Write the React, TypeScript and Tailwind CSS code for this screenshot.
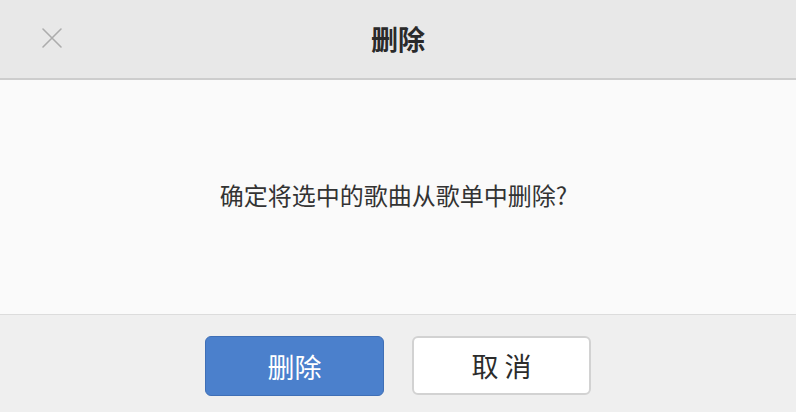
const CloseIcon = () => (
    <svg width="22" height="22" viewBox="0 0 22 22" fill="none" stroke="#acacac" strokeWidth="1.6" strokeLinecap="round">
        <path d="M2 2 L20 20 M20 2 L2 20" />
    </svg>
)

const App = () => {
    return <>
        <div className="w-[796px] h-[412px] flex flex-col overflow-hidden" style={{ fontFamily: '"Noto Sans CJK SC", "Noto Sans", sans-serif' }}>
            <div className="relative h-[80px] shrink-0 flex items-center justify-center bg-[#e8e8e8] border-b-2 border-[#cdcdcd]">
                <button className="absolute left-[41px] top-[27px] cursor-pointer">
                    <CloseIcon />
                </button>
                <h1 className="text-[27px] font-bold text-[#2a2a2a] leading-none -mt-[2px]">删除</h1>
            </div>
            <div className="h-[234px] shrink-0 flex items-center justify-center bg-[#fafafa]">
                <p className="text-[24px] text-[#333] leading-none -mt-[4px] pr-[9px]">确定将选中的歌曲从歌单中删除?</p>
            </div>
            <div className="flex-1 flex justify-center gap-[28px] pt-[21px] bg-[#efefef] border-t border-[#dcdcdc]">
                <button className="w-[179px] h-[60px] rounded-[6px] bg-[#4b80cc] border border-[#3f6fb6] text-white text-[27px] leading-none cursor-pointer">删除</button>
                <button className="w-[179px] h-[59px] rounded-[6px] bg-white border-2 border-[#d2d2d2] text-[#2c2c2c] text-[27px] leading-none cursor-pointer">取 消</button>
            </div>
        </div>
    </>
}

export default App
